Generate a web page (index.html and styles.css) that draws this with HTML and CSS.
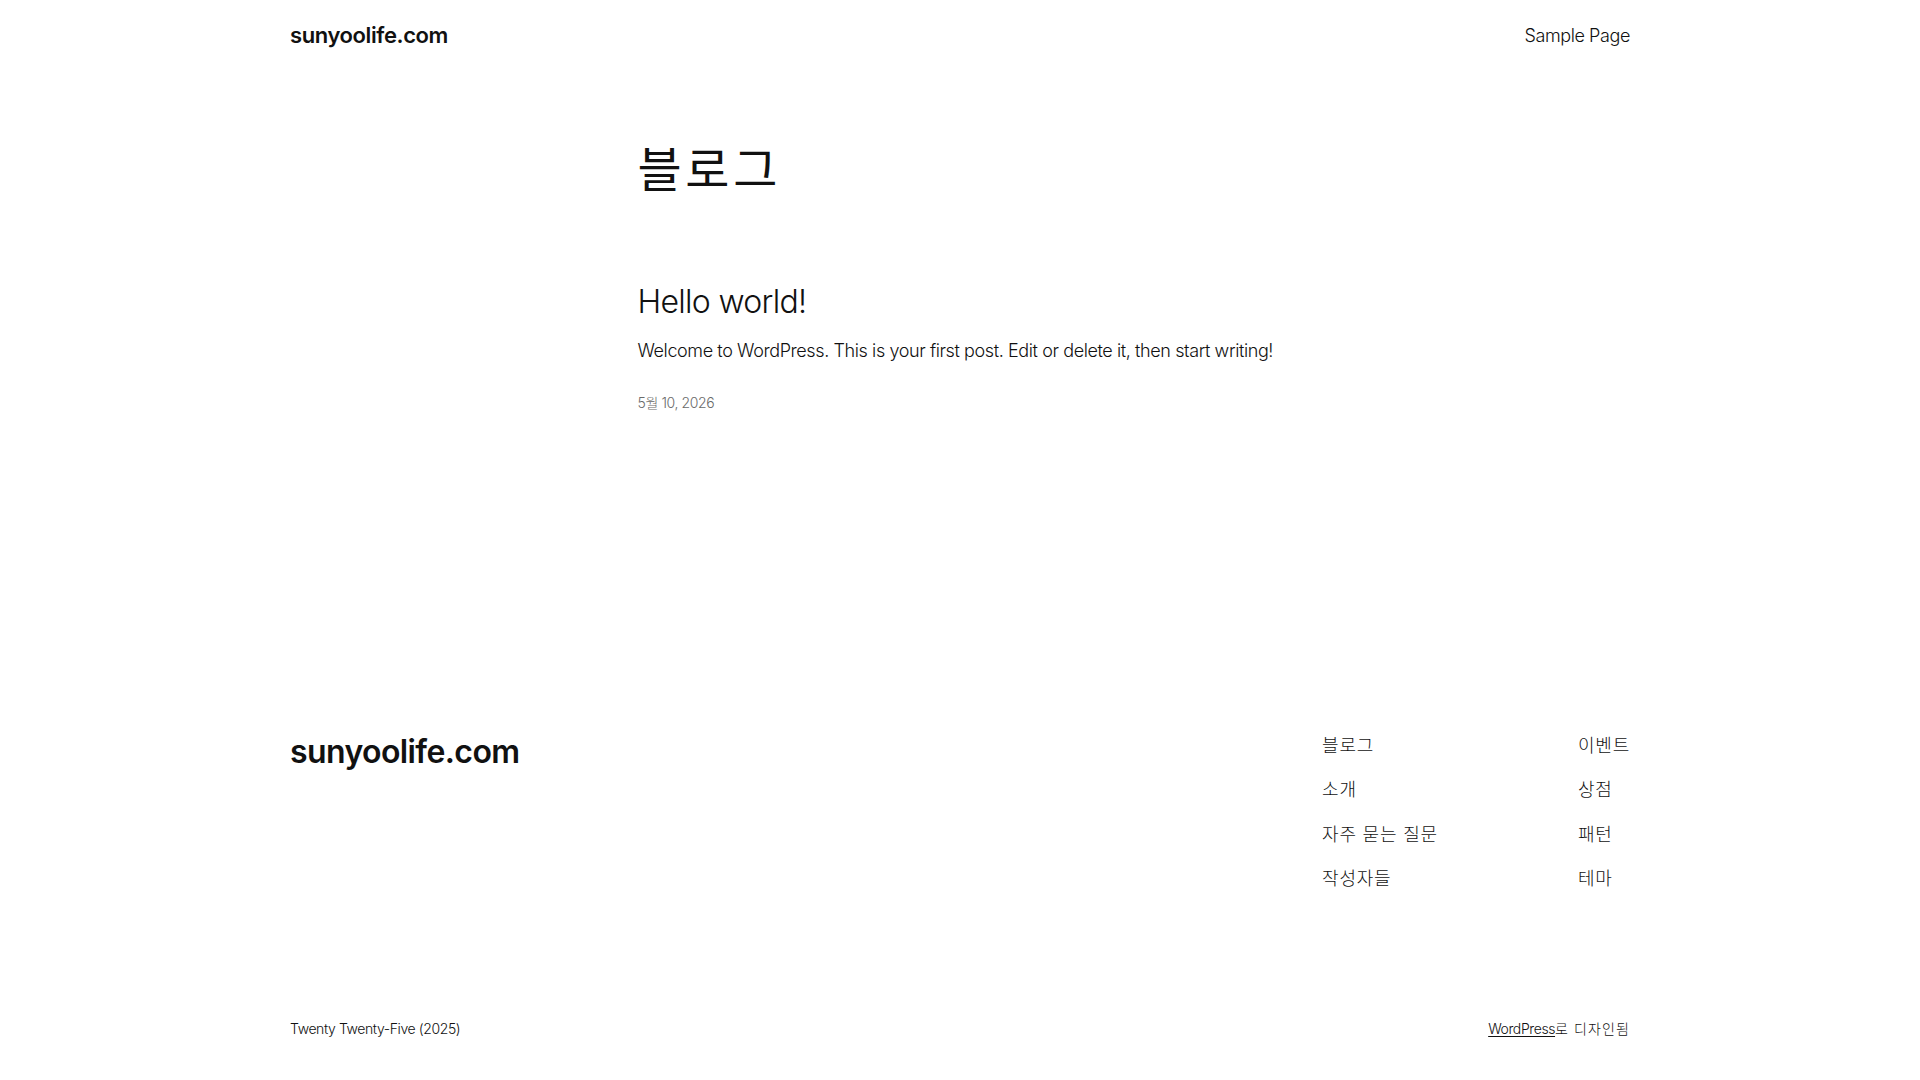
FILE: index.html
```html
<!DOCTYPE html>
<html lang="ko">
<head>
<meta charset="utf-8">
<title>블로그 – sunyoolife.com</title>
<link rel="stylesheet" href="styles.css">
</head>
<body>
<div class="page">
  <header class="site-header">
    <a class="site-title" href="#">sunyoolife.com</a>
    <nav class="header-nav"><a href="#">Sample Page</a></nav>
  </header>

  <main class="site-main">
    <h1 class="page-title">블로그</h1>
    <article class="post">
      <h2 class="post-title"><a href="#">Hello world!</a></h2>
      <p class="post-excerpt">Welcome to WordPress. This is your first post. Edit or delete it, then start writing!</p>
      <div class="post-date">5월 10, 2026</div>
    </article>
  </main>

  <footer class="site-footer">
    <div class="footer-top">
      <a class="footer-title" href="#">sunyoolife.com</a>
      <div class="footer-navs">
        <ul class="footer-nav">
          <li><a href="#">블로그</a></li>
          <li><a href="#">소개</a></li>
          <li><a href="#">자주 묻는 질문</a></li>
          <li><a href="#">작성자들</a></li>
        </ul>
        <ul class="footer-nav">
          <li><a href="#">이벤트</a></li>
          <li><a href="#">상점</a></li>
          <li><a href="#">패턴</a></li>
          <li><a href="#">테마</a></li>
        </ul>
      </div>
    </div>
    <div class="footer-bottom">
      <span>Twenty Twenty-Five (2025)</span>
      <span><a class="underline" href="#">WordPress</a><span class="ko">로 디자인됨</span></span>
    </div>
  </footer>
</div>
</body>
</html>
```

FILE: styles.css
```css
* { box-sizing: border-box; }
html, body { margin: 0; padding: 0; background: #ffffff; }
body {
  font-family: Inter, "Noto Sans CJK KR", sans-serif;
  font-weight: 300;
  color: #111111;
  font-size: 18px;
  line-height: 1.4;
  letter-spacing: -0.4px;
}
a { color: inherit; text-decoration: none; }
ul { list-style: none; margin: 0; padding: 0; }
h1, h2, p { margin: 0; }

.page { width: 1920px; }

.site-header {
  width: 1340px;
  margin: 0 auto;
  height: 71px;
  display: flex;
  align-items: center;
  justify-content: space-between;
}
.site-title {
  font-size: 22px;
  font-weight: 600;
  letter-spacing: -0.4px;
}
.header-nav { font-size: 18px; }

.site-main {
  width: 645px;
  margin: 70px auto 0;
}
.page-title {
  font-size: 48px;
  font-weight: 400;
  line-height: 1.2;
  letter-spacing: 3.7px;
}
.post { margin-top: 84px; }
.post-title {
  font-size: 32px;
  font-weight: 300;
  line-height: 1.2;
  letter-spacing: -0.7px;
}
.post-excerpt { margin-top: 17px; }
.post-date {
  margin-top: 30px;
  font-size: 14px;
  color: #6a6a6a;
}

.site-footer {
  width: 1340px;
  margin: 320px auto 0;
}
.footer-top {
  display: flex;
  justify-content: space-between;
  align-items: flex-start;
}
.footer-title {
  font-size: 32px;
  font-weight: 600;
  line-height: 1.2;
  letter-spacing: -0.6px;
}
.footer-navs {
  display: flex;
  gap: 140px;
}
.footer-nav {
  display: flex;
  flex-direction: column;
  gap: 19.3px;
  letter-spacing: 0.8px;
}
.footer-bottom {
  margin-top: 128px;
  display: flex;
  justify-content: space-between;
  font-size: 14px;
}
.ko { letter-spacing: 1.1px; }
.underline { text-decoration: underline; text-underline-offset: 2px; }
```
